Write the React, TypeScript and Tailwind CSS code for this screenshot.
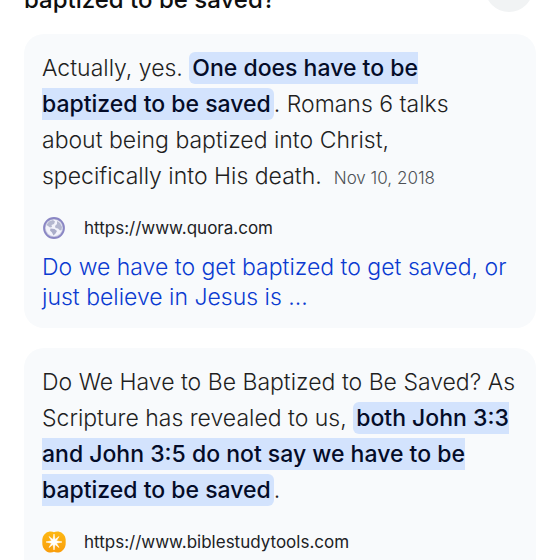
import type { ReactNode } from "react";

function Mark({ children }: { children: ReactNode }) {
  return (
    <mark className="rounded-md bg-[#d3e3fd] px-[3px] py-[2px] font-medium text-[#040c28]">
      {children}
    </mark>
  );
}

function GlobeIcon() {
  return (
    <svg viewBox="0 0 24 24" className="size-6" aria-hidden="true">
      <circle cx="12" cy="12" r="10" fill="#c9cbe0" stroke="#8a86c4" strokeWidth="1.800" />
      <circle cx="12" cy="12" r="8.200" fill="#f3f3fb" />
      <path d="M4.500 9 7 5.500l4-1.500 2 1.500-1 2.500-2.500 1 .5 2-2 .5L6 10z" fill="#b4b7cf" />
      <path d="m15 5 3 2 2 4-.5 3-1.500.5-2-2-2.500-.5L13 10l2-2z" fill="#b4b7cf" />
      <path d="m8.500 12.500 4 .5 2.500 2-1.500 2.500-2 2-1.500-3-2-2z" fill="#aaadc9" />
    </svg>
  );
}

function StarburstIcon() {
  return (
    <svg viewBox="0 0 24 24" className="size-6" aria-hidden="true">
      <defs>
        <linearGradient id="burst" x1="0" y1="0" x2="0" y2="1">
          <stop offset="0" stopColor="#fdb813" />
          <stop offset="1" stopColor="#f99d0c" />
        </linearGradient>
      </defs>
      <path
        d="M12 2.200C14 1 18 1.200 20 3c3 2 4 5 3.700 9 .3 4-1 7-3.700 9-2 1.800-6 2-8 .8-2 1.200-6 1-8-.8-2.700-2-4-5-3.700-9C0 8 1 5 4 3c2-1.800 6-2 8-.8z"
        fill="url(#burst)"
      />
      <path
        d="m12 4 1 5.600L17 6.500l-2.600 4.300L20 12l-5.600 1.200L17 17.500l-4-3.100-1 5.600-1-5.600-4 3.100 2.600-4.300L4 12l5.600-1.200L7 6.500l4 3.100z"
        fill="#fff"
        stroke="#fff"
        strokeWidth=".6"
      />
    </svg>
  );
}

function Source({ icon, url }: { icon: ReactNode; url: string }) {
  return (
    <div className="mt-[22px] flex items-center gap-[18px] text-[17px] leading-6 text-[#202124]">
      {icon}
      <cite className="not-italic">{url}</cite>
    </div>
  );
}

export default function App() {
  return (
    <div className="h-screen overflow-hidden bg-white px-6 font-['Inter','Liberation_Sans',sans-serif] text-[#1f1f1f]">
      <header className="-mt-9 mb-4 flex items-end justify-between">
        <h2 className="text-2xl leading-9 font-medium text-[#0f0f0f]">
          baptized to be saved?
        </h2>
        <button
          type="button"
          aria-label="Collapse"
          className="mr-[3px] mb-[6px] size-12 rounded-full bg-[#f1f3f4]"
        />
      </header>

      <main className="flex flex-col gap-5">
        <article className="rounded-[20px] bg-slate-50 px-[18px] py-4">
          <p className="text-[23px] leading-9 font-light">
            Actually, yes.{" "}
            <Mark>
              One does have to be
              <br />
              baptized to be saved
            </Mark>
            . Romans 6 talks
            <br />
            about being baptized into Christ,
            <br />
            specifically into His death.
            <span className="ml-3 text-[17px] leading-none text-[#4d5156]">Nov 10, 2018</span>
          </p>
          <Source icon={<GlobeIcon />} url="https://www.quora.com" />
          <a
            href="#quora"
            className="mt-3 block text-[23px] leading-[30px] font-light text-[#0b3bd1]"
          >
            Do we have to get baptized to get saved, or
            <br />
            just believe in Jesus is ...
          </a>
        </article>

        <article className="rounded-t-[20px] bg-slate-50 px-[18px] py-4">
          <p className="text-[23px] leading-9 font-light">
            Do We Have to Be Baptized to Be Saved? As
            <br />
            Scripture has revealed to us,{" "}
            <Mark>
              both John 3:3
              <br />
              and John 3:5 do not say we have to be
              <br />
              baptized to be saved
            </Mark>
            .
          </p>
          <Source icon={<StarburstIcon />} url="https://www.biblestudytools.com" />
        </article>
      </main>
    </div>
  );
}
